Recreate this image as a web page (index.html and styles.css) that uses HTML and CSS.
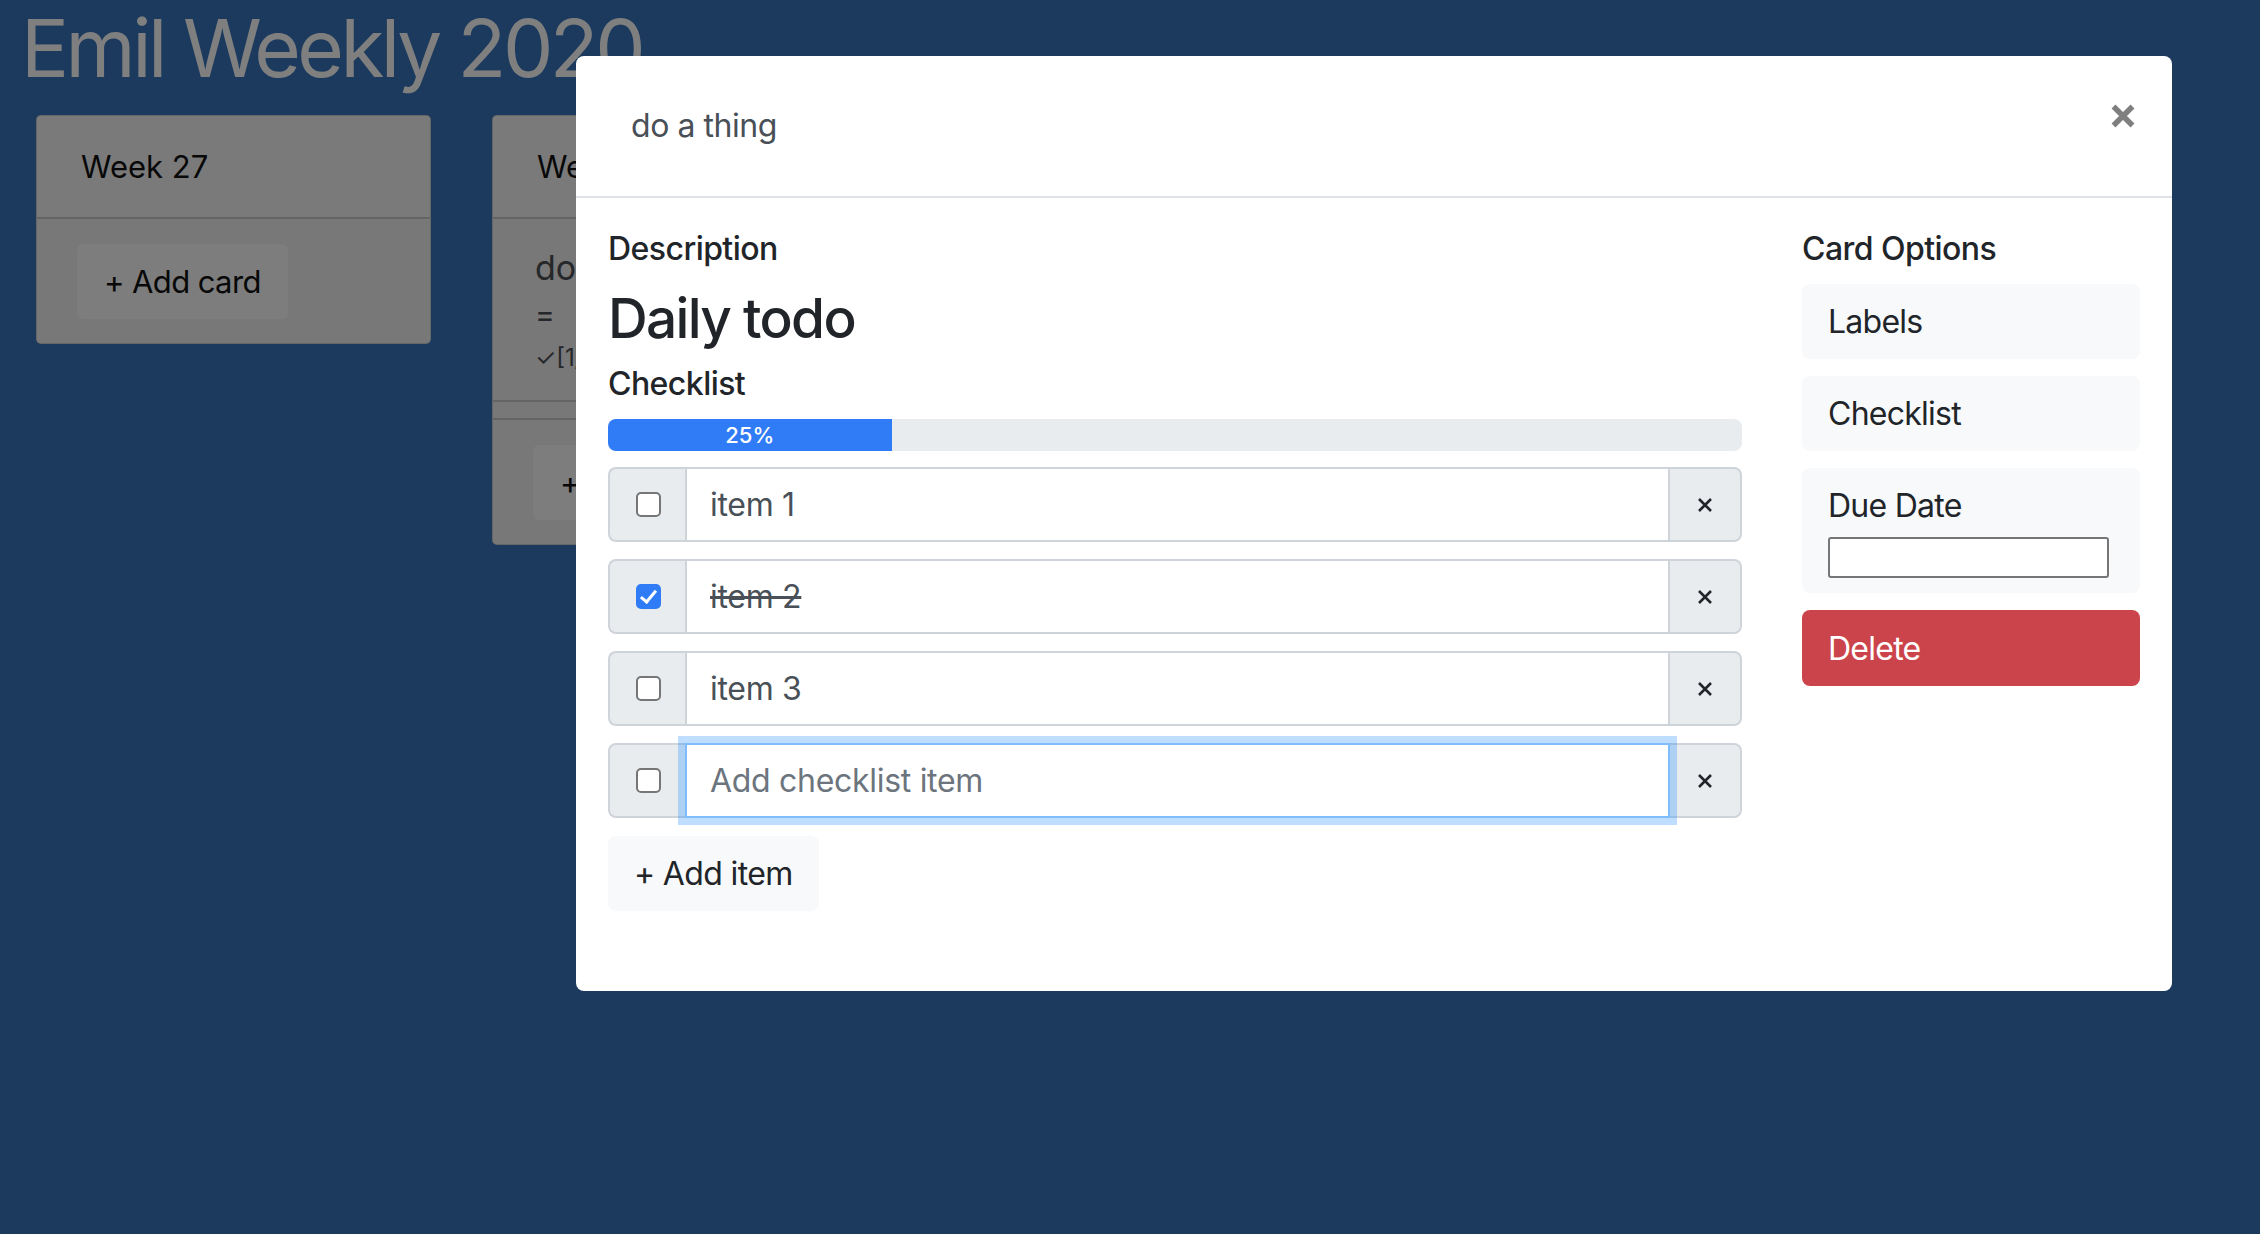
FILE: index.html
```html
<!DOCTYPE html>
<html lang="en">
<head>
<meta charset="utf-8">
<title>Emil Weekly 2020</title>
<link rel="stylesheet" href="styles.css">
</head>
<body>
<div class="board">
  <h1 class="board-title">Emil Weekly 2020</h1>
  <div class="lists">
    <div class="list">
      <div class="list-header">Week 27</div>
      <div class="list-body"><button class="add-card">+ Add card</button></div>
    </div>
    <div class="list">
      <div class="list-header">Week 28</div>
      <div class="list-items">
        <div class="list-item">
          <div class="item-title">do a thing</div>
          <div class="item-icon">=</div>
          <div class="item-meta">✓[1/4]</div>
        </div>
      </div>
      <div class="list-body"><button class="add-card">+ Add card</button></div>
    </div>
  </div>
</div>

<div class="backdrop"></div>

<div class="modal">
  <div class="modal-header">
    <div class="modal-title">do a thing</div>
    <button class="close" aria-label="Close">
      <svg width="24" height="24" viewBox="0 0 24 24"><path d="M2.5 2.5 L21.5 21.5 M21.5 2.5 L2.5 21.5" stroke="#7f7f7f" stroke-width="5.5" fill="none"/></svg>
    </button>
  </div>
  <div class="modal-body">
    <div class="main-col">
      <h5 class="section-label">Description</h5>
      <h2 class="description">Daily todo</h2>
      <h5 class="section-label checklist-label">Checklist</h5>
      <div class="progress"><div class="progress-bar" style="width:25%">25%</div></div>
      <div class="check-list">
        <div class="check-row">
          <div class="prepend"><input type="checkbox" class="cb"></div>
          <input type="text" class="item-input" value="item 1">
          <button class="append"><svg width="16" height="16" viewBox="0 0 16 16"><path d="M2 2 L14 14 M14 2 L2 14" stroke="#212529" stroke-width="2.6" fill="none"/></svg></button>
        </div>
        <div class="check-row">
          <div class="prepend"><input type="checkbox" class="cb" checked></div>
          <input type="text" class="item-input done" value="item 2">
          <button class="append"><svg width="16" height="16" viewBox="0 0 16 16"><path d="M2 2 L14 14 M14 2 L2 14" stroke="#212529" stroke-width="2.6" fill="none"/></svg></button>
        </div>
        <div class="check-row">
          <div class="prepend"><input type="checkbox" class="cb"></div>
          <input type="text" class="item-input" value="item 3">
          <button class="append"><svg width="16" height="16" viewBox="0 0 16 16"><path d="M2 2 L14 14 M14 2 L2 14" stroke="#212529" stroke-width="2.6" fill="none"/></svg></button>
        </div>
        <div class="check-row">
          <div class="prepend"><input type="checkbox" class="cb"></div>
          <input type="text" class="item-input focused" placeholder="Add checklist item">
          <button class="append"><svg width="16" height="16" viewBox="0 0 16 16"><path d="M2 2 L14 14 M14 2 L2 14" stroke="#212529" stroke-width="2.6" fill="none"/></svg></button>
        </div>
      </div>
      <button class="add-item">+ Add item</button>
    </div>
    <div class="side-col">
      <h5 class="section-label">Card Options</h5>
      <div class="options">
        <button class="opt">Labels</button>
        <button class="opt">Checklist</button>
        <div class="opt due">
          <div class="due-label">Due Date</div>
          <input type="text" class="due-input">
        </div>
        <button class="opt delete">Delete</button>
      </div>
    </div>
  </div>
</div>
</body>
</html>
```

FILE: styles.css
```css
* { box-sizing: border-box; }
html, body { margin: 0; }
body {
  width: 2260px;
  height: 1234px;
  overflow: hidden;
  background: #3674ba;
  font-family: Inter, "Noto Sans", sans-serif;
  color: #212529;
}

/* board */
.board-title {
  margin: 0;
  padding-left: 21px;
  font-size: 80px;
  line-height: 96px;
  font-weight: 400;
  color: #fff;
  letter-spacing: -3.5px;
}
.lists {
  display: flex;
  align-items: flex-start;
  gap: 61px;
  margin-top: 19px;
  padding-left: 36px;
}
.list {
  width: 395px;
  background: #f1f1f1;
  border: 1px solid rgba(0,0,0,.15);
  border-radius: 5px;
  overflow: hidden;
}
.list-header {
  height: 103px;
  display: flex;
  align-items: center;
  padding: 0 44px;
  background: #f4f4f4;
  border-bottom: 2px solid #c8c8c8;
  font-size: 31px;
  color: #111;
}
.list-body { padding: 25px 40px 24px; }
.add-card {
  height: 75px;
  padding: 0 27px;
  border: none;
  border-radius: 6px;
  background: #fafafa;
  font-family: inherit;
  font-size: 31px;
  letter-spacing: -0.6px;
  color: #111;
}
.list-items {
  padding-bottom: 16px;
  border-bottom: 2px solid #c8c8c8;
}
.list-item {
  height: 183px;
  padding: 28px 20px 0 42px;
  border-bottom: 2px solid #c8c8c8;
  color: #4a4f55;
}
.item-title { font-size: 34px; line-height: 41px; white-space: nowrap; }
.item-icon { font-size: 30px; line-height: 36px; margin-top: 8px; }
.item-meta { font-size: 24px; line-height: 28px; margin-top: 12px; }

/* overlay */
.backdrop {
  position: fixed;
  inset: 0;
  background: rgba(0,0,0,.5);
}
.modal {
  position: absolute;
  left: 576px;
  top: 56px;
  width: 1596px;
  background: #fff;
  border-radius: 8px;
  letter-spacing: -0.6px;
}
.modal-header {
  height: 142px;
  display: flex;
  justify-content: space-between;
  align-items: center;
  padding: 0 37px 0 55px;
  border-bottom: 2px solid #dee2e6;
}
.modal-title {
  font-size: 32px;
  line-height: 38px;
  color: #495057;
  letter-spacing: -0.45px;
}
.close {
  align-self: flex-start;
  margin-top: 48px;
  width: 24px;
  height: 24px;
  padding: 0;
  border: none;
  background: none;
  display: block;
}
.close svg { display: block; }

.modal-body {
  display: flex;
  gap: 60px;
  padding: 32px 32px 80px;
}
.main-col { flex: 1; min-width: 0; }
.side-col { width: 338px; flex: none; }

.section-label {
  margin: 0;
  font-size: 32px;
  line-height: 38px;
  font-weight: 500;
  color: #212529;
  letter-spacing: -0.55px;
}
.description {
  margin: 17px 0 0;
  font-size: 55px;
  line-height: 66px;
  font-weight: 500;
  letter-spacing: -1.7px;
  color: #212529;
}
.checklist-label { margin-top: 14px; }

.progress {
  margin-top: 16px;
  height: 32px;
  background: #e9ecef;
  border-radius: 8px;
  overflow: hidden;
  display: flex;
}
.progress-bar {
  background: #307cf6;
  color: #fff;
  font-size: 22px;
  font-weight: 500;
  line-height: 32px;
  text-align: center;
  letter-spacing: 0;
}

.check-list {
  margin-top: 16px;
  display: flex;
  flex-direction: column;
  gap: 17px;
}
.check-row {
  display: flex;
  height: 75px;
}
.prepend {
  width: 77px;
  flex: none;
  display: flex;
  align-items: center;
  justify-content: center;
  background: #e9ecef;
  border: 2px solid #ced4da;
  border-right: none;
  border-radius: 8px 0 0 8px;
}
.cb {
  -webkit-appearance: none;
  appearance: none;
  width: 25px;
  height: 25px;
  margin: 0 0 0 2px;
  border: 2px solid #767676;
  border-radius: 5px;
  background: #fff;
  position: relative;
}
.cb:checked {
  background: #307cf6;
  border-color: #307cf6;
}
.cb:checked::after {
  content: "";
  position: absolute;
  left: 6px;
  top: 1px;
  width: 6px;
  height: 13px;
  border: solid #fff;
  border-width: 0 3.5px 3.5px 0;
  transform: rotate(40deg);
}
.item-input {
  flex: 1;
  min-width: 0;
  height: 75px;
  margin: 0;
  padding: 0 20px 0 23px;
  border: 2px solid #ced4da;
  background: #fff;
  font-family: inherit;
  font-size: 32px;
  letter-spacing: -0.3px;
  color: #495057;
  outline: none;
}
.item-input.done { text-decoration: line-through; }
.item-input::placeholder { color: #6c757d; }
.item-input.focused {
  position: relative;
  z-index: 1;
  border-color: #80bdff;
  box-shadow: 0 0 0 7px rgba(0,123,255,.25);
}
.append {
  width: 72px;
  flex: none;
  display: flex;
  align-items: center;
  justify-content: center;
  padding: 0;
  background: #e9ecef;
  border: 2px solid #ced4da;
  border-left: none;
  border-radius: 0 8px 8px 0;
}
.append svg { display: block; }

.add-item {
  margin-top: 18px;
  height: 75px;
  padding: 0 26px;
  border: none;
  border-radius: 8px;
  background: #f8f9fa;
  font-family: inherit;
  font-size: 32px;
  letter-spacing: -0.65px;
  color: #212529;
  display: block;
}

.options {
  margin-top: 16px;
  display: flex;
  flex-direction: column;
  gap: 17px;
}
.opt {
  display: block;
  width: 100%;
  height: 75px;
  padding: 0 26px;
  border: none;
  border-radius: 8px;
  background: #f8f9fa;
  font-family: inherit;
  font-size: 32px;
  letter-spacing: -0.75px;
  color: #212529;
  text-align: left;
}
.opt.due {
  height: 125px;
  padding: 19px 26px 14px;
}
.due-label {
  font-size: 32px;
  line-height: 38px;
}
.due-input {
  display: block;
  margin-top: 12px;
  width: 281px;
  height: 41px;
  border: 2px solid #767676;
  border-radius: 3px;
  background: #fff;
  font-family: inherit;
}
.opt.delete {
  height: 76px;
  background: #cc444b;
  color: #fff;
}
```
